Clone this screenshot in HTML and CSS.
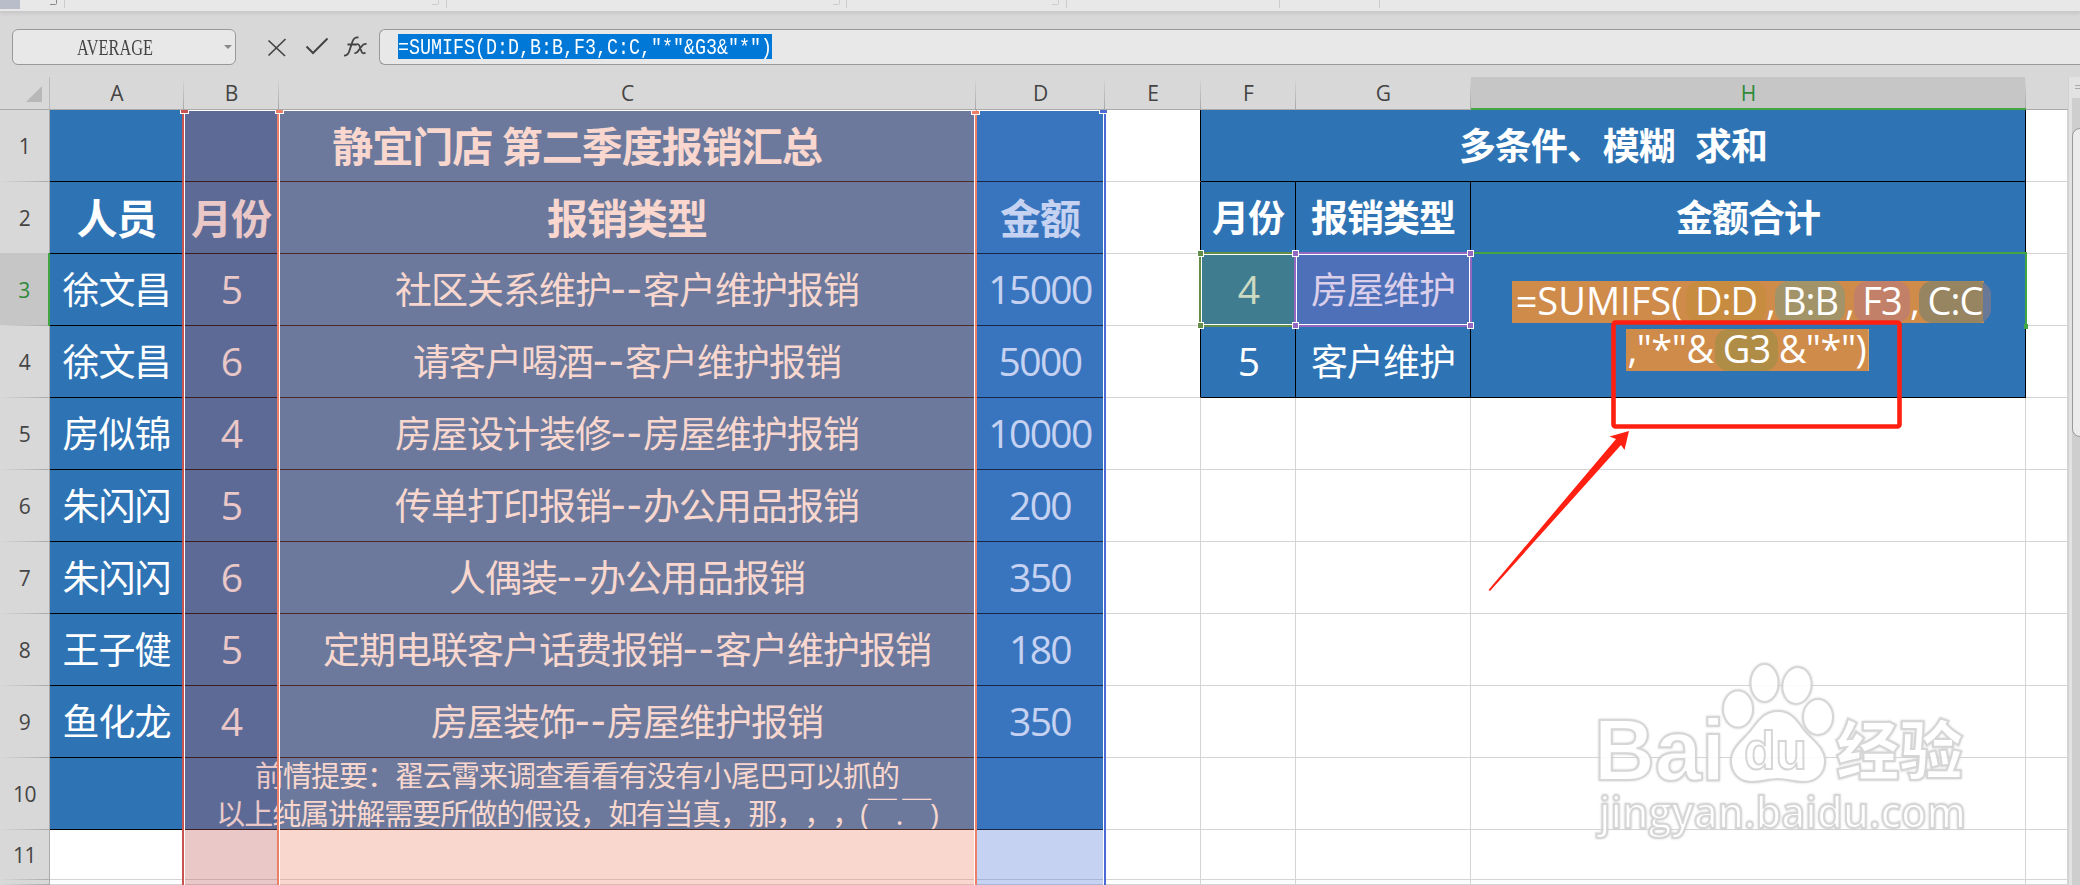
FILE: index.html
```html
<!DOCTYPE html>
<html lang="zh-CN">
<head>
    <meta charset="UTF-8">
    <title>报销汇总</title>
    <link rel="stylesheet" href="styles.css">
</head>
<body>
    <div class="ribbon">
        <svg width="2080" height="12" viewBox="0 0 2080 12">
            <rect x="0" y="0" width="20" height="9" fill="#b9bdc9"/>
            <path d="M56.500 0v3.500q0 1-1 1H50" fill="none" stroke="#888"/>
            <path d="M438.500 0v3.500q0 1-1 1H432M839.500 0v3.500q0 1-1 1H833M1058.500 0v3.500q0 1-1 1H1052M64.500 0v8M446.500 0v8M846.500 0v8M1066.500 0v8M1279.500 0v8M1379.500 0v8" fill="none" stroke="#ccc"/>
        </svg>
    </div>

    <div class="formula-bar">
        <div class="name-box">
            <span class="name">AVERAGE</span>
            <span class="caret"></span>
        </div>
        <svg class="tools" width="144" height="36" viewBox="235 29 144 36">
            <path d="M268.500 40.500L285 56M285.500 39L268.500 55.500" stroke="#444" stroke-width="1.700" fill="none"/>
            <path d="M306.500 46.500L313 53L327.500 38.500" stroke="#444" stroke-width="2" fill="none"/>
            <path d="M344 55.500q4 .5 5.500-5l3-9q1.500-4.500 6-4M347.500 44.500h8.500" stroke="#444" stroke-width="1.800" fill="none"/>
            <path d="M355.500 45q3-2 4 1l2 5.500q1 3 4 1M366.500 44q-3-.5-5 2.500l-3 4q-1.500 3-4 2.500" stroke="#444" stroke-width="1.800" fill="none"/>
        </svg>
        <div class="formula-box">
            <div class="selected"><span>=SUMIFS(D:D,B:B,F3,C:C,"*"&amp;G3&amp;"*")</span></div>
        </div>
    </div>

    <div class="workspace">
        <div class="sheet">
            <div class="grid">
                <div class="corner"><svg width="50" height="32"><path d="M42 9v16H26z" fill="#b8b8b8"/></svg></div>
                <div class="col">A</div>
                <div class="col">B</div>
                <div class="col">C</div>
                <div class="col">D</div>
                <div class="col">E</div>
                <div class="col">F</div>
                <div class="col">G</div>
                <div class="col active">H</div>
                <div class="col last"></div>

                <div class="row">1</div>
                <div class="cell data head span4">静宜门店 第二季度报销汇总</div>
                <div class="cell edge"></div>
                <div class="cell box sub title span3">多条件、模糊  求和</div>
                <div class="cell"></div>

                <div class="row">2</div>
                <div class="cell data head">人员</div>
                <div class="cell data head">月份</div>
                <div class="cell data head">报销类型</div>
                <div class="cell data head">金额</div>
                <div class="cell edge"></div>
                <div class="cell box sub">月份</div>
                <div class="cell box sub">报销类型</div>
                <div class="cell box sub">金额合计</div>
                <div class="cell"></div>

                <div class="row active">3</div>
                <div class="cell data">徐文昌</div>
                <div class="cell data num">5</div>
                <div class="cell data"><p>社区关系维护<i>--</i>客户维护报销</p></div>
                <div class="cell data num">15000</div>
                <div class="cell edge"></div>
                <div class="cell box num">4</div>
                <div class="cell box">房屋维护</div>
                <div class="cell box result">
                    <div class="line first">
                        <span class="w-fn">=SUMIFS(</span><span class="ref r-d">D:D</span><span class="comma">,</span><span class="ref r-b">B:B</span><span class="comma">,</span><span class="ref r-f">F3</span><span class="comma">,</span><span class="ref r-c">C:C</span>
                    </div>
                    <div class="line second">
                        <span class="w-str">,"*"&amp;</span><span class="ref r-g">G3</span><span class="w-end">&amp;"*")</span>
                    </div>
                </div>
                <div class="cell"></div>

                <div class="row">4</div>
                <div class="cell data">徐文昌</div>
                <div class="cell data num">6</div>
                <div class="cell data"><p>请客户喝酒<i>--</i>客户维护报销</p></div>
                <div class="cell data num">5000</div>
                <div class="cell edge"></div>
                <div class="cell box num">5</div>
                <div class="cell box">客户维护</div>
                <div class="cell"></div>

                <div class="row">5</div>
                <div class="cell data">房似锦</div>
                <div class="cell data num">4</div>
                <div class="cell data"><p>房屋设计装修<i>--</i>房屋维护报销</p></div>
                <div class="cell data num">10000</div>
                <div class="cell"></div>
                <div class="cell"></div>
                <div class="cell"></div>
                <div class="cell"></div>
                <div class="cell"></div>

                <div class="row">6</div>
                <div class="cell data">朱闪闪</div>
                <div class="cell data num">5</div>
                <div class="cell data"><p>传单打印报销<i>--</i>办公用品报销</p></div>
                <div class="cell data num">200</div>
                <div class="cell"></div>
                <div class="cell"></div>
                <div class="cell"></div>
                <div class="cell"></div>
                <div class="cell"></div>

                <div class="row">7</div>
                <div class="cell data">朱闪闪</div>
                <div class="cell data num">6</div>
                <div class="cell data"><p>人偶装<i>--</i>办公用品报销</p></div>
                <div class="cell data num">350</div>
                <div class="cell"></div>
                <div class="cell"></div>
                <div class="cell"></div>
                <div class="cell"></div>
                <div class="cell"></div>

                <div class="row">8</div>
                <div class="cell data">王子健</div>
                <div class="cell data num">5</div>
                <div class="cell data"><p>定期电联客户话费报销<i>--</i>客户维护报销</p></div>
                <div class="cell data num">180</div>
                <div class="cell"></div>
                <div class="cell"></div>
                <div class="cell"></div>
                <div class="cell"></div>
                <div class="cell"></div>

                <div class="row">9</div>
                <div class="cell data">鱼化龙</div>
                <div class="cell data num">4</div>
                <div class="cell data"><p>房屋装饰<i>--</i>房屋维护报销</p></div>
                <div class="cell data num">350</div>
                <div class="cell"></div>
                <div class="cell"></div>
                <div class="cell"></div>
                <div class="cell"></div>
                <div class="cell"></div>

                <div class="row">10</div>
                <div class="cell data note span4">
                    <p>前情提要：翟云霄来调查看看有没有小尾巴可以抓的</p>
                    <p>以上纯属讲解需要所做的假设，如有当真，那，，，(￣.￣)</p>
                </div>
                <div class="cell"></div>
                <div class="cell"></div>
                <div class="cell"></div>
                <div class="cell"></div>
                <div class="cell"></div>

                <div class="row">11</div>
                <div class="cell"></div>
                <div class="cell"></div>
                <div class="cell"></div>
                <div class="cell"></div>
                <div class="cell"></div>
                <div class="cell"></div>
                <div class="cell"></div>
                <div class="cell"></div>
                <div class="cell"></div>

                <div class="row"></div>
                <div class="cell"></div>
                <div class="cell"></div>
                <div class="cell"></div>
                <div class="cell"></div>
                <div class="cell"></div>
                <div class="cell"></div>
                <div class="cell"></div>
                <div class="cell"></div>
                <div class="cell"></div>
            </div>

            <!-- referenced ranges, same tracks as the cells -->
            <div class="grid ranges">
                <div class="range range-d"></div>
                <div class="range range-b"></div>
                <div class="range range-c"></div>
                <div class="range range-f3"><b></b><b></b><b></b><b></b></div>
                <div class="range range-g3"><b></b><b></b><b></b><b></b></div>
                <div class="range-active"><b></b></div>
            </div>
        </div>

        <div class="scrollbar">
            <div class="split"></div>
            <div class="track"><div class="thumb"></div></div>
        </div>
    </div>

    <svg class="overlay" width="2080" height="885" viewBox="0 0 2080 885">
        <rect x="1613.500" y="322.500" width="286" height="104" rx="2" fill="none" stroke="#ff2012" stroke-width="4.600"/>
        <path d="M1629 431L1609.500 436.500L1616 439L1488.500 590L1490 591L1621 445L1624.500 450z" fill="#ff2012"/>
        <g class="mark">
            <text x="1594" y="780" font-size="88" font-weight="bold" font-family="Liberation Sans" textLength="131" lengthAdjust="spacingAndGlyphs">Bai</text>
            <ellipse cx="1738" cy="709" rx="15" ry="18.500"/>
            <ellipse cx="1764.500" cy="683" rx="14" ry="19"/>
            <ellipse cx="1797" cy="685.500" rx="14.500" ry="18.500" transform="rotate(8 1797 685)"/>
            <ellipse cx="1818" cy="717" rx="15" ry="18"/>
            <path d="M1778 711c14 0 20 11 26 19s21 17 21 31c0 13-9 21-22 21-10 0-15-3-25-3s-16 3-26 3c-13 0-21-9-21-21 0-14 13-22 20-31s13-19 27-19z"/>
            <text x="1744" y="769" font-size="54" font-weight="bold" font-family="Liberation Sans" textLength="63" lengthAdjust="spacingAndGlyphs">du</text>
            <text x="1836" y="774" font-size="64" font-weight="900" font-family="Noto Sans CJK SC" textLength="127" lengthAdjust="spacingAndGlyphs">经验</text>
            <text x="1599" y="828" font-size="43" font-weight="600" font-family="Open Sans" textLength="367" lengthAdjust="spacingAndGlyphs">jingyan.baidu.com</text>
        </g>
    </svg>
</body>
</html>
```
FILE: styles.css
```css
* {
    box-sizing: border-box;
}
body {
    margin: 0;
    width: 2080px;
    height: 885px;
    overflow: hidden;
    background-color: #d8d8d8;
    font-family: "Open Sans", "Noto Sans CJK SC", sans-serif;
}
p {
    margin: 0;
}
.ribbon {
    height: 12px;
    background-color: #e8e8e8;
    border-bottom: 1px solid #cacaca;
    box-shadow: 0 1px 4px rgba(0, 0, 0, 0.1);
    overflow: hidden;
}
.ribbon svg {
    display: block;
}
.formula-bar {
    display: flex;
    height: 65px;
    padding: 17px 0 0 12px;
}
.name-box {
    display: flex;
    align-items: center;
    width: 224px;
    height: 36px;
    border: 1px solid #999;
    border-radius: 6px;
    background-color: #e8e8e8;
}
.name {
    width: 204px;
    padding-top: 2px;
    text-align: center;
    font-family: "Liberation Serif", serif;
    font-size: 23px;
    color: #444;
    transform: scaleX(0.71);
}
.caret {
    margin-left: 7px;
    border: 4px solid transparent;
    border-top-color: #888;
    border-bottom: 0;
}
.tools {
    margin-left: -1px;
}
.formula-box {
    flex: 1;
    height: 36px;
    padding: 4px 0 0 18px;
    border: 1px solid #999;
    border-right: 0;
    border-radius: 6px 0 0 6px;
    background-color: #e8e8e8;
}
.selected {
    width: 374px;
    height: 25px;
    line-height: 29px;
    background-color: #0078d7;
    color: #fff;
    white-space: nowrap;
}
.selected span {
    display: inline-block;
    font-family: "Liberation Mono", monospace;
    font-size: 22px;
    transform: scaleX(0.833);
    transform-origin: left;
}
.workspace {
    display: flex;
    height: 808px;
}
.sheet {
    display: grid;
    width: 2068px;
}
.grid {
    grid-area: 1 / 1;
    display: grid;
    grid-template-columns: 50px 134px 95px 697px 129px 96px 95px 175px 555px 42px;
    grid-template-rows: 33px repeat(10, 72px) 50px 5px;
}
.ranges {
    z-index: 1;
}
.corner {
    border-bottom: 1px solid #aaa;
    border-right: 1px solid #bbb;
}
.col {
    display: flex;
    align-items: center;
    justify-content: center;
    font-size: 21px;
    color: #444;
    border-bottom: 1px solid #aaa;
    background: linear-gradient(#d8d8d8, #a8a8a8) right / 1px 100% no-repeat;
}
.col.active {
    background-color: #c6c6c6;
    color: #2f8a3a;
    border-bottom: 2px solid #42a544;
}
.col.last {
    background: none;
}
.row {
    display: flex;
    align-items: center;
    justify-content: center;
    font-size: 21px;
    color: #444;
    letter-spacing: -0.5px;
    border-right: 1px solid #aaa;
    background: linear-gradient(to right, #d8d8d8, #aaa) bottom / 100% 1px no-repeat;
}
.row.active {
    margin-top: -1px;
    padding-top: 1px;
    background-color: #c6c6c6;
    color: #2f8a3a;
    border-right: 2px solid #42a544;
}
.cell {
    display: flex;
    align-items: center;
    justify-content: center;
    min-width: 0;
    min-height: 0;
    background-color: #fff;
    border-right: 1px solid #d4d4d4;
    border-bottom: 1px solid #d4d4d4;
    font-size: 37px;
    line-height: 54px;
    letter-spacing: -1px;
    white-space: pre;
}
.cell i {
    font-style: normal;
    font-size: 45px;
    line-height: 1px;
    letter-spacing: 1.5px;
}
.edge {
    border-right-color: #000;
}
.data {
    background-color: #2e74b5;
    color: #fff;
    border-right: 0;
    border-bottom-color: #000;
    padding-right: 1px;
}
.box {
    background-color: #2e74b5;
    color: #fff;
    border-color: #000;
}
.head {
    padding-top: 1px;
    font-size: 41px;
    font-weight: bold;
}
.sub {
    padding-top: 1px;
    font-weight: bold;
}
.title {
    word-spacing: 1.5px;
}
.num {
    padding-bottom: 2px;
    font-size: 39px;
    letter-spacing: -1.6px;
}
.span4 {
    grid-column: span 4;
}
.span3 {
    grid-column: span 3;
}
.note {
    flex-direction: column;
    padding-top: 3px;
    overflow: hidden;
    font-size: 29px;
    line-height: 38px;
    white-space: nowrap;
    text-spacing-trim: space-all;
}
.result {
    grid-row: span 2;
    flex-direction: column;
    align-items: flex-start;
    justify-content: flex-start;
    padding: 27px 0 0 41px;
    gap: 6px;
    letter-spacing: 0;
    font-size: 38px;
    white-space: nowrap;
}
.line {
    display: flex;
    height: 42px;
    line-height: 39px;
    background-color: #cf8b4a;
}
.first {
    width: 472px;
}
.second {
    width: 243px;
    margin-left: 114px;
    border-right: 1px solid #e0a060;
}
.line span {
    flex: none;
    text-align: center;
}
.w-fn {
    width: 174px;
    letter-spacing: 0;
}
.ref {
    border-radius: 14px;
    letter-spacing: -1px;
}
.comma {
    width: 9px;
}
.r-d {
    width: 80px;
    background-color: #c78c40;
}
.r-b {
    width: 70px;
    background-color: #a29468;
}
.r-f {
    width: 56px;
    background-color: #c38069;
}
.r-c {
    width: 72px;
    background: linear-gradient(to right, #978461 64px, #6a7898 64px);
}
.r-g {
    width: 63px;
    background-color: #b08d47;
}
.w-str, .w-end {
    width: 89px;
    letter-spacing: -0.5px;
}
.range-b, .range-c, .range-d {
    grid-row: 2 / -1;
    border-top: 1px solid #fff;
}
.range-b {
    grid-column: 3;
    margin: 0 1px 0 -2px;
    border-left: 2px solid #c75450;
    background-color: rgba(195, 88, 88, 0.33);
    background-clip: padding-box;
    box-shadow: inset 1px 0 #fff;
}
.range-c {
    grid-column: 4;
    margin: 0 -1px 0 -2px;
    border-left: 2px solid #ed7f66;
    border-right: 2px solid #ed7f66;
    background-color: rgba(237, 133, 107, 0.33);
    background-clip: padding-box;
    box-shadow: inset 1px 0 #fff, inset -1px 0 #fff;
}
.range-d {
    grid-column: 5;
    margin: 0 -1px 0 1px;
    border-right: 2px solid #4a6bd6;
    background-color: rgba(82, 118, 214, 0.33);
    background-clip: padding-box;
    box-shadow: inset -1px 0 #fff;
}
.range-f3, .range-g3 {
    position: relative;
    grid-row: 4;
    margin: -2px -1px -1px -2px;
    border: 2px solid #638e47;
    background-color: rgba(99, 142, 71, 0.33);
    background-clip: padding-box;
    box-shadow: inset 0 0 0 1px #fff;
}
.range-f3 {
    grid-column: 7;
}
.range-g3 {
    grid-column: 8;
    border-color: #9268c0;
    background-color: rgba(146, 106, 192, 0.33);
}
/* corner handles */
.range b {
    position: absolute;
    width: 7px;
    height: 7px;
    border: 1px solid #fff;
    background-color: #638e47;
}
.range-g3 b {
    background-color: #9268c0;
}
.range b:nth-child(1) {
    left: -4px;
    top: -4px;
}
.range b:nth-child(2) {
    right: -4px;
    top: -4px;
}
.range b:nth-child(3) {
    left: -4px;
    bottom: -4px;
}
.range b:nth-child(4) {
    right: -4px;
    bottom: -4px;
}
.range-b::before, .range-c::before, .range-c::after, .range-d::after {
    content: "";
    display: block;
    width: 7px;
    height: 3px;
    margin: -1px 0 0 -4px;
    border: 1px solid #fff;
    border-top: 0;
    background-color: #c75450;
}
.range-c::before, .range-c::after {
    background-color: #ed7f66;
}
.range-c::after {
    margin: -3px -5px 0 auto;
}
.range-d::after {
    margin: -1px -4px 0 auto;
    background-color: #4a6bd6;
}
.range-active {
    position: relative;
    grid-column: 9;
    grid-row: 4;
    margin: -2px -1px 2px 3px;
    border-top: 2px solid #42a544;
    border-right: 2px solid #42a544;
}
.range-active b {
    position: absolute;
    right: -3px;
    bottom: -5px;
    width: 4px;
    height: 5px;
    background-color: #42a544;
}
.scrollbar {
    width: 12px;
    border-left: 1px solid #d2d2d2;
    background-color: #e2e2e2;
    overflow: hidden;
}
.split {
    width: 6px;
    height: 4px;
    margin: 8px 0 9px 6px;
    border-top: 1px solid #aaa;
    border-bottom: 1px solid #aaa;
}
.track {
    height: 787px;
    margin-left: 3px;
    padding-top: 30px;
    background-color: #cecece;
}
.thumb {
    width: 20px;
    height: 309px;
    border: 1px solid #999;
    border-radius: 8px;
    background-color: #ececec;
}
.overlay {
    position: absolute;
    left: 0;
    top: 0;
    z-index: 2;
}
.mark {
    fill: #fff;
    stroke: #d2d2d2;
    stroke-width: 2px;
    opacity: 0.9;
    filter: drop-shadow(0 0 1px #ccc);
}
```
